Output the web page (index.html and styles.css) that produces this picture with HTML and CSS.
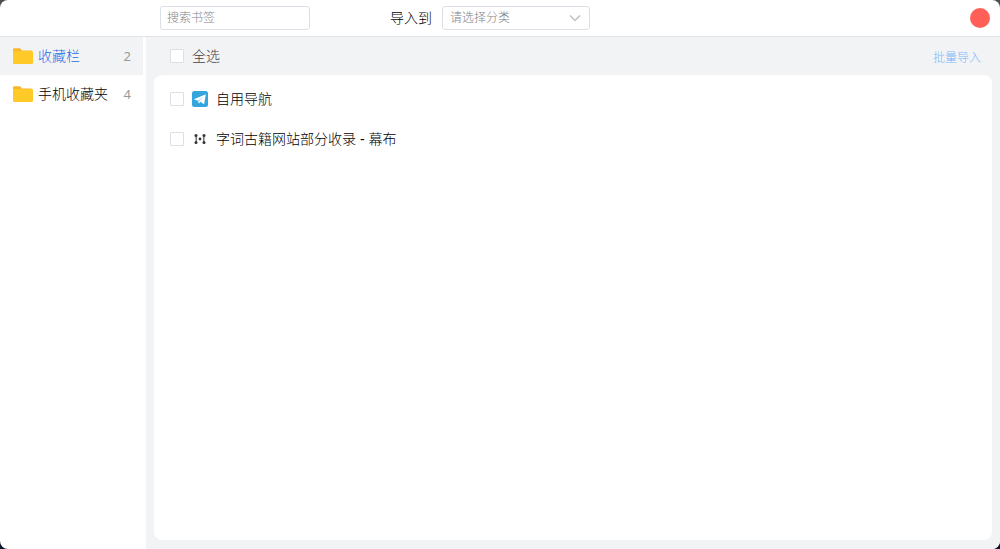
FILE: index.html
```html
<!DOCTYPE html>
<html lang="zh-CN">

<head>
    <meta charset="UTF-8">
    <meta name="viewport" content="width=device-width, initial-scale=1.0">
    <title>导入书签</title>
    <link rel="stylesheet" href="styles.css">
</head>

<body>
    <div class="window">
        <header class="topbar">
            <input type="text" class="search" placeholder="搜索书签" aria-label="搜索书签">
            <label class="target-label" for="category">导入到</label>
            <div class="select-wrap">
                <select id="category" class="select">
                    <option value="">请选择分类</option>
                </select>
                <svg class="select-arrow" viewBox="0 0 12 12" width="12" height="12">
                    <path d="M1 3.5L6 8.5L11 3.5" fill="none" stroke="#b4b8be" stroke-width="1.1" />
                </svg>
            </div>
            <button type="button" class="close" aria-label="关闭"></button>
        </header>

        <div class="content">
            <nav class="sidebar">
                <a href="#" class="folder active">
                    <svg class="folder-icon" viewBox="0 0 20 16" width="20" height="16">
                        <path d="M0 1.5Q0 0.3 1.2 0.3H6.6Q7.4 0.3 7.8 1L9 2.6H18Q19 2.6 19 3.6V8H0Z" fill="#f9b62b" />
                        <path d="M0 4Q0 3 1 3H18.8Q20 3 20 4.2V14.8Q20 16 18.8 16H1.2Q0 16 0 14.8Z" fill="#ffc928" />
                    </svg>
                    <span class="folder-name">收藏栏</span>
                    <span class="folder-count">2</span>
                </a>
                <a href="#" class="folder">
                    <svg class="folder-icon" viewBox="0 0 20 16" width="20" height="16">
                        <path d="M0 1.5Q0 0.3 1.2 0.3H6.6Q7.4 0.3 7.8 1L9 2.6H18Q19 2.6 19 3.6V8H0Z" fill="#f9b62b" />
                        <path d="M0 4Q0 3 1 3H18.8Q20 3 20 4.2V14.8Q20 16 18.8 16H1.2Q0 16 0 14.8Z" fill="#ffc928" />
                    </svg>
                    <span class="folder-name">手机收藏夹</span>
                    <span class="folder-count">4</span>
                </a>
            </nav>

            <main class="main">
                <div class="toolbar">
                    <label class="check-all">
                        <input type="checkbox" class="checkbox">
                        <span>全选</span>
                    </label>
                    <button type="button" class="batch" disabled>批量导入</button>
                </div>
                <div class="list">
                    <label class="bookmark">
                        <input type="checkbox" class="checkbox">
                        <svg class="site-icon" viewBox="0 0 16 16" width="16" height="16">
                            <rect width="16" height="16" rx="2.5" fill="#34a5dd" />
                            <path d="M2 8.2L13.2 3.6Q13.8 3.5 13.7 4.2L12.2 12.4Q12 13.2 11.3 12.8L8.5 10.8L7 12.2Q6.5 12.6 6.4 12L5.6 9.6L2 8.6Z" fill="#fff" />
                            <path d="M5.8 9.4L11.4 5.8L7.2 10L6.7 12.2Z" fill="#a9d7ee" />
                        </svg>
                        <span>自用导航</span>
                    </label>
                    <label class="bookmark">
                        <input type="checkbox" class="checkbox">
                        <svg class="site-icon" viewBox="0 0 16 16" width="16" height="16" fill="#333">
                            <path d="M4.2 4V12M11.8 4V12" stroke="#555" stroke-width="1.2" />
                            <circle cx="4" cy="4.6" r="1.5" />
                            <circle cx="4" cy="11.4" r="1.5" />
                            <circle cx="12" cy="4.6" r="1.5" />
                            <circle cx="12" cy="11.4" r="1.5" />
                            <circle cx="8" cy="8" r="1.4" />
                        </svg>
                        <span>字词古籍网站部分收录 - 幕布</span>
                    </label>
                </div>
            </main>
        </div>
    </div>
</body>

</html>
```

FILE: styles.css
```css
* {
    box-sizing: border-box;
}

body {
    margin: 0;
    font-family: "Liberation Sans", "Noto Sans CJK SC", sans-serif;
    font-size: 14px;
    font-weight: 300;
    line-height: 20px;
    color: #000;
    background: linear-gradient(#4a4d52, #0b1829);
}

input,
select,
button {
    margin: 0;
    font-family: inherit;
    font-weight: inherit;
}

.window {
    display: flex;
    flex-direction: column;
    height: 100vh;
    border-radius: 8px;
    overflow: hidden;
    background-color: #fff;
}

/* top bar */
.topbar {
    display: flex;
    align-items: center;
    height: 37px;
    padding: 0 10px 0 160px;
    border-bottom: 1px solid #e1e3e6;
}

.search,
.select {
    height: 24px;
    padding: 0 6px;
    border: 1px solid #dcdfe6;
    border-radius: 3px;
    background-color: #fff;
    font-size: 12px;
    color: #808388;
    outline: none;
}

.search {
    width: 150px;
}

.search::placeholder {
    color: #808388;
}

.target-label {
    margin-left: 80px;
    margin-right: 10px;
}

.select-wrap {
    position: relative;
    width: 148px;
    height: 24px;
}

.select {
    display: block;
    width: 100%;
    padding: 0 24px 0 7px;
    appearance: none;
}

.select-arrow {
    position: absolute;
    top: 6px;
    right: 9px;
    pointer-events: none;
}

.close {
    width: 20px;
    height: 20px;
    margin-left: auto;
    padding: 0;
    border: none;
    border-radius: 50%;
    background-color: #ff5f57;
    cursor: pointer;
}

/* folders */
.content {
    display: flex;
    flex: 1;
    min-height: 0;
}

.sidebar {
    flex: none;
    width: 146px;
    padding-right: 3px;
}

.folder {
    display: flex;
    align-items: center;
    height: 38px;
    padding: 0 12px 0 13px;
    color: #000;
    text-decoration: none;
}

.folder.active {
    background-color: #f2f3f5;
    color: #1f6be6;
}

.folder-icon {
    margin-right: 5px;
}

.folder-count {
    margin-left: auto;
    font-family: "Noto Sans", sans-serif;
    font-size: 13px;
    font-weight: 400;
    color: #999;
}

/* bookmarks */
.main {
    display: flex;
    flex: 1;
    flex-direction: column;
    padding: 0 8px 9px;
    background-color: #f2f3f5;
}

.toolbar {
    display: flex;
    align-items: center;
    justify-content: space-between;
    height: 38px;
    padding: 0 11px 0 16px;
}

.check-all,
.bookmark {
    display: flex;
    align-items: center;
    gap: 8px;
}

.check-all {
    color: #404246;
}

.checkbox {
    width: 14px;
    height: 14px;
    border: 1px solid #dcdfe6;
    border-radius: 1px;
    background-color: #fff;
    appearance: none;
}

.checkbox:checked {
    border-color: #3a7fe8;
    background-color: #3a7fe8;
}

.batch {
    padding: 0;
    border: none;
    background: none;
    font-size: 12px;
    color: #7db8fa;
}

.list {
    flex: 1;
    padding: 4px 16px;
    border-radius: 8px;
    background-color: #fff;
}

.bookmark {
    height: 40px;
}
```
